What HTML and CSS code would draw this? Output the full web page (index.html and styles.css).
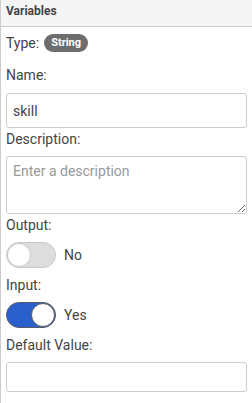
FILE: index.html
```html
<!DOCTYPE html>
<html lang="en">
<head>
  <meta charset="UTF-8" />
  <meta name="viewport" content="width=device-width, initial-scale=1.0" />
  <title>Variables</title>
  <link rel="stylesheet" href="styles.css">
</head>
<body>
  <div class="panel">
    <div class="panel-header">Variables</div>
    <div class="panel-body">
      <div class="type-row">
        <span>Type:</span>
        <span class="badge">String</span>
      </div>

      <label class="label label-first" for="name">Name:</label>
      <input class="field" id="name" type="text" value="skill">

      <label class="label label-tight" for="desc">Description:</label>
      <textarea class="field area" id="desc" placeholder="Enter a description"></textarea>

      <div class="label label-tight">Output:</div>
      <div class="switch-row">
        <span class="switch"><span class="knob"></span></span>
        <span>No</span>
      </div>

      <div class="label">Input:</div>
      <div class="switch-row">
        <span class="switch on"><span class="knob"></span></span>
        <span>Yes</span>
      </div>

      <label class="label" for="default">Default Value:</label>
      <input class="field small" id="default" type="text">
    </div>
  </div>
</body>
</html>
```

FILE: styles.css
```css
body {
  margin: 0;
  font-family: Roboto, 'Liberation Sans', sans-serif;
  font-size: 14px;
  color: #444;
  background: white;
}
.panel {
  border-left: 1px solid #ccc;
  height: 403px;
  box-sizing: border-box;
}
.panel-header {
  height: 27px;
  box-sizing: border-box;
  padding: 4px 5px 0;
  background: #f5f5f5;
  border-bottom: 1px solid #ccc;
  font-weight: bold;
  font-size: 12px;
  color: #444;
}
.panel-body {
  padding: 6px 5px 0;
  display: flex;
  flex-direction: column;
}
.type-row {
  display: flex;
  align-items: center;
  gap: 5px;
  height: 20px;
}
.badge {
  background: #6d6d6d;
  color: white;
  font-weight: bold;
  font-size: 11px;
  height: 18px;
  line-height: 18px;
  padding: 0 7px;
  border-radius: 9px;
}
.label {
  display: block;
  height: 20px;
  line-height: 20px;
  margin-top: 7px;
  margin-bottom: 7px;
}
.label-first {
  margin-top: 12px;
  margin-bottom: 8px;
}
.label-tight {
  margin-top: 1px;
}
.field {
  box-sizing: border-box;
  width: 100%;
  height: 35px;
  margin: 0;
  border: 1px solid #ccc;
  border-radius: 3px;
  padding: 0 6px;
  font-family: inherit;
  font-size: 14px;
  color: #444;
  background: white;
}
.area {
  height: 58px;
  padding: 6px;
  resize: vertical;
  display: block;
}
.area::placeholder {
  color: #999;
}
.small {
  height: 30px;
}
.switch-row {
  display: flex;
  align-items: center;
  gap: 8px;
}
.switch {
  width: 50px;
  height: 26px;
  box-sizing: border-box;
  border: 1px solid #c8c8c8;
  border-radius: 13px;
  background: #ddd;
  display: flex;
  align-items: center;
  padding: 0;
}
.switch .knob {
  width: 24px;
  height: 24px;
  box-sizing: border-box;
  border-radius: 50%;
  background: white;
  border: 1px solid #c8c8c8;
}
.switch.on {
  background: #2b60cc;
  border-color: #555a66;
  justify-content: flex-end;
}
.switch.on .knob {
  border-color: #555a66;
}
```
